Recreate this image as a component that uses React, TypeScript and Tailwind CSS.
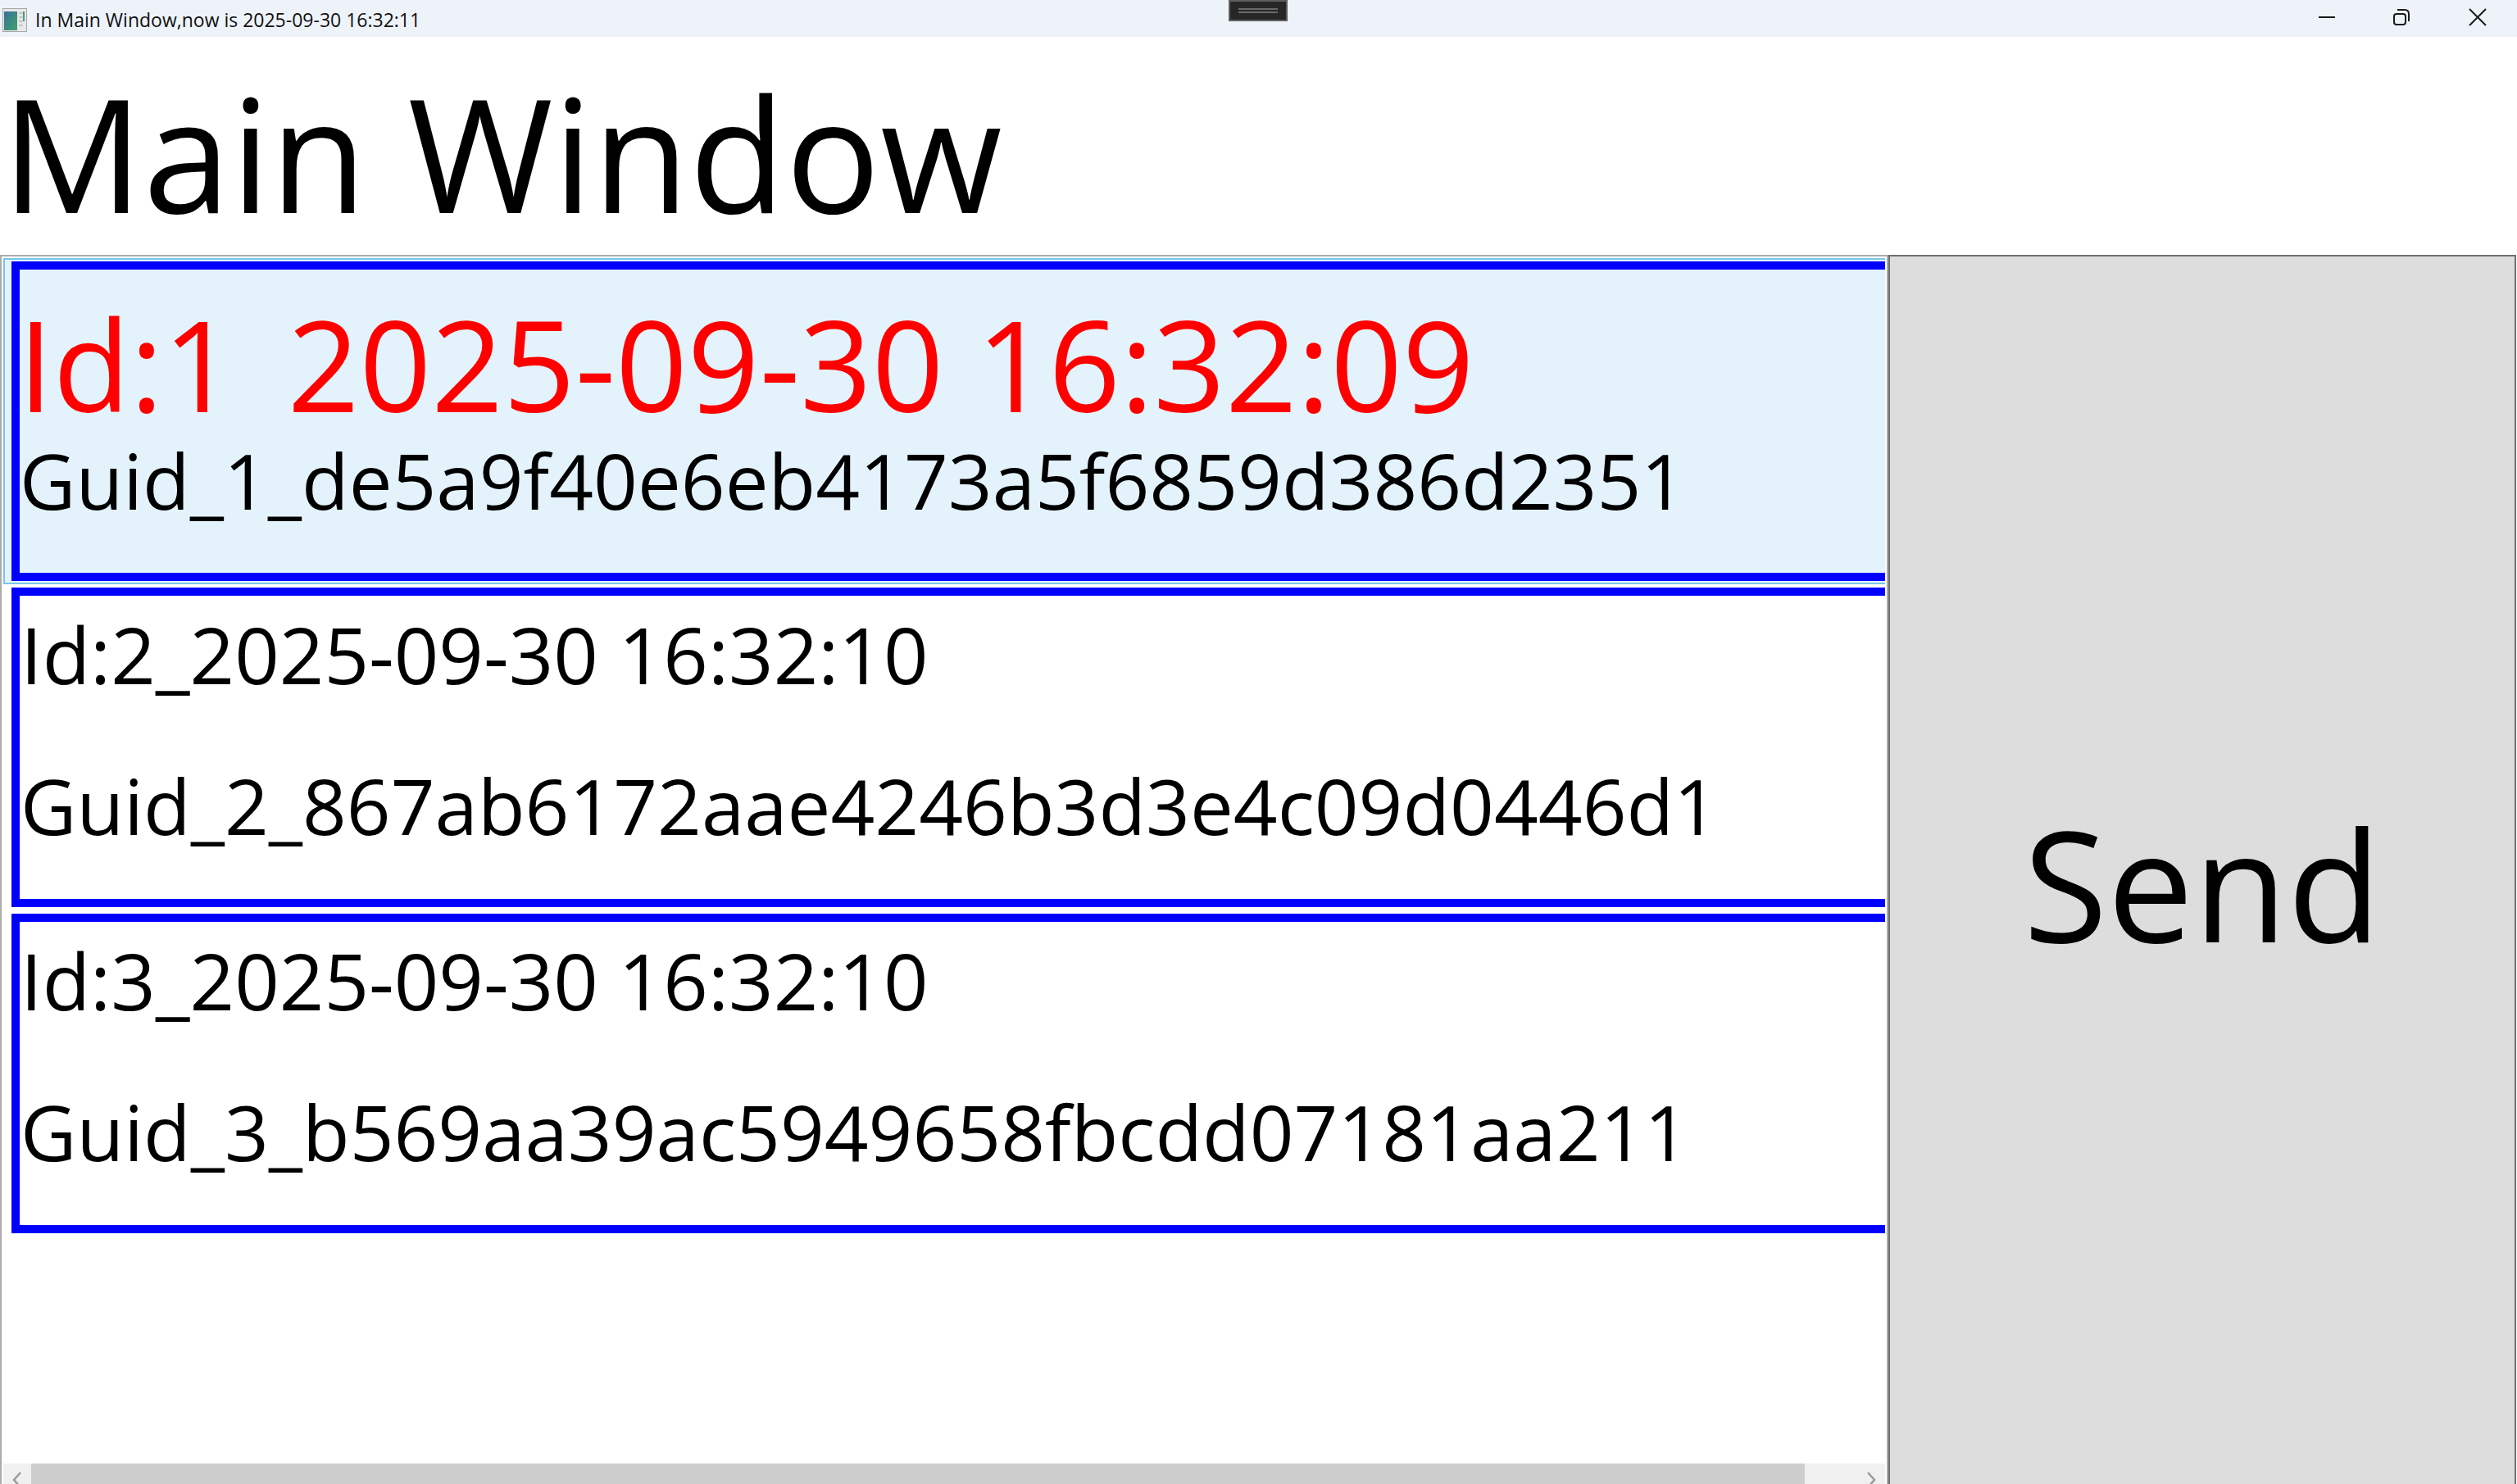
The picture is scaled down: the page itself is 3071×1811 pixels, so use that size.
// App.tsx
const font = "font-['Open_Sans','Noto_Sans',sans-serif]"

function WindowIcon() {
  return (
    <svg width="30" height="29" viewBox="0 0 30 29" className="shrink-0">
      <defs>
        <linearGradient id="pane" x1="0" y1="0" x2="1" y2="1">
          <stop offset="0" stopColor="#3a6f9c" />
          <stop offset="1" stopColor="#3fa26a" />
        </linearGradient>
      </defs>
      <rect x="0.5" y="0.5" width="29" height="28" fill="#e8e8e8" stroke="#a8a8a8" />
      <rect x="2" y="4" width="16" height="23" fill="url(#pane)" />
      <rect x="20" y="5" width="5" height="2" fill="#c4c4c4" />
      <rect x="20" y="10" width="5" height="2" fill="#c4c4c4" />
      <rect x="20" y="15" width="5" height="2" fill="#c4c4c4" />
      <rect x="20" y="20" width="5" height="2" fill="#c4c4c4" />
      <rect x="25" y="4" width="2" height="12" fill="#4f9a82" />
    </svg>
  )
}

function TitleBar() {
  return (
    <div className="relative flex h-[45px] shrink-0 items-center bg-[#eef3fa]">
      <div className="ml-[3px] mt-[3px] flex items-center">
        <WindowIcon />
        <span className="ml-[10px] text-[23px] leading-[40px] text-[#111]">
          In Main Window,now is 2025-09-30 16:32:11
        </span>
      </div>
      {/* snap handle that floats over the title bar */}
      <div className="absolute left-[1499px] top-0 flex h-[26px] w-[72px] flex-col items-center justify-center gap-[2px] border-2 border-[#5f5f5f] bg-[#272727]">
        <div className="h-[2px] w-[48px] bg-[#6a6a6a]" />
        <div className="h-[2px] w-[48px] bg-[#6a6a6a]" />
      </div>
      <div className="mb-[3px] ml-auto flex items-center">
        <svg width="24" height="24" viewBox="0 0 24 24" className="mr-[67px]">
          <path d="M2 12H22" stroke="#1a1a1a" strokeWidth="2" fill="none" />
        </svg>
        <svg width="24" height="24" viewBox="0 0 24 24" className="mr-[69px]">
          <rect x="3" y="8" width="14" height="13" rx="3" stroke="#1a1a1a" strokeWidth="2" fill="none" />
          <path d="M7 3H16C19 3 21 5 21 8V17" stroke="#1a1a1a" strokeWidth="2" fill="none" />
        </svg>
        <svg width="24" height="24" viewBox="0 0 24 24" className="mr-[36px]">
          <path d="M2 2L22 22M22 2L2 22" stroke="#1a1a1a" strokeWidth="2" fill="none" />
        </svg>
      </div>
    </div>
  )
}

function ListRow({ id, guid }: { id: string; guid: string }) {
  return (
    <div className="h-[398px] shrink-0 py-[4px] pl-[10px]">
      <div className="h-[390px] border-y-[10px] border-l-[10px] border-[#0000ff] pl-[1px] text-black">
        <div className="h-[185px] whitespace-nowrap text-[95.5px] leading-[142px]">{id}</div>
        <div className="h-[185px] whitespace-nowrap text-[94.2px] leading-[142px]">{guid}</div>
      </div>
    </div>
  )
}

function SelectedRow() {
  return (
    <div className="h-[398px] shrink-0 border-2 border-r-0 border-[#78c6e8] bg-[#e4f3fb] py-[2px] pl-[8px]">
      <div className="h-[390px] border-y-[10px] border-l-[10px] border-[#0000ff]">
        <div className="ml-[-2px] whitespace-nowrap pt-[20px] text-[153.5px] leading-[190px] text-[#ff0000]">
          <span className="mr-[-16px]">Id:1</span> &nbsp;2025-09-30 16:32:09
        </div>
        <div className="whitespace-nowrap text-[94.2px] leading-[94px] text-black">
          Guid_1_de5a9f40e6eb4173a5f6859d386d2351
        </div>
      </div>
    </div>
  )
}

function ScrollBar() {
  return (
    <div className="mx-[2px] flex h-[25px] shrink-0 overflow-hidden bg-[#f0f0f0]">
      <div className="flex w-[34px] shrink-0 justify-center pt-[10px]">
        <svg width="12" height="20" viewBox="0 0 12 20" className="shrink-0">
          <path d="M10 1L2 10L10 19" stroke="#9a9a9a" strokeWidth="2.5" fill="none" />
        </svg>
      </div>
      <div className="w-[2164px] bg-[#cdcdcd]" />
      <div className="flex flex-1 justify-end pr-[11px] pt-[10px]">
        <svg width="12" height="20" viewBox="0 0 12 20" className="shrink-0">
          <path d="M2 1L10 10L2 19" stroke="#9a9a9a" strokeWidth="2.5" fill="none" />
        </svg>
      </div>
    </div>
  )
}

export default function App() {
  return (
    <div className={`flex h-[1811px] w-[3071px] flex-col overflow-hidden bg-white ${font}`}>
      <TitleBar />
      <div className="h-[266px] shrink-0 whitespace-nowrap pl-[2px] pt-[15px] text-[192px] leading-[251px] text-black">
        Main Window
      </div>
      <div className="flex min-h-0 flex-1">
        <div className="flex w-[2304px] shrink-0 flex-col overflow-hidden border-x-2 border-t-2 border-[#ababab]">
          <div className="flex min-h-0 flex-1 flex-col overflow-hidden px-[2px] pt-[2px]">
            <SelectedRow />
            <ListRow id="Id:2_2025-09-30 16:32:10" guid="Guid_2_867ab6172aae4246b3d3e4c09d0446d1" />
            <ListRow id="Id:3_2025-09-30 16:32:10" guid="Guid_3_b569aa39ac5949658fbcdd07181aa211" />
          </div>
          <ScrollBar />
        </div>
        <div className="mr-[1px] flex flex-1 items-center justify-center border-x-2 border-t-2 border-[#707070] bg-[#dddddd] pt-[32px] text-[187px] text-black">
          Send
        </div>
      </div>
    </div>
  )
}
